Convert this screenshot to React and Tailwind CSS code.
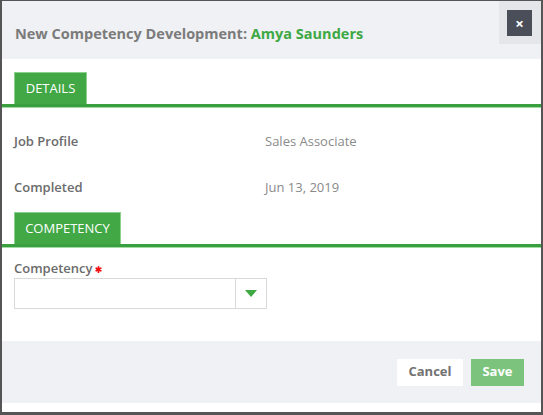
import React from "react";

const SectionTab = ({ label, width }) => (
  <div className="pl-[12px]">
    <div
      className={`flex h-[32px] items-center justify-center border border-b-0 border-[#8bd08d] bg-[#41a845] text-[13px] text-white ${width}`}
    >
      {label}
    </div>
    <div className="-ml-[12px] h-[3px] bg-[#3a9f3e]" />
    <div className="-ml-[12px] h-[1px] bg-[#a3dba5]" />
  </div>
);

const InfoRow = ({ label, value }) => (
  <div className="flex h-[46px] items-center pl-[12px] text-[13px]">
    <span className="w-[251px] font-semibold text-[#6b6b6b]">{label}</span>
    <span className="text-[#8a8a8a]">{value}</span>
  </div>
);

export default function App() {
  return (
    <div className="flex h-[415px] w-[543px] flex-col border-x-2 border-t border-b-[3px] border-[#555] bg-white font-['Open_Sans',sans-serif]">
      <div className="flex h-[58px] justify-between bg-[#f0f1f4]">
        <h1 className="pl-[13px] pt-[23px] text-[14.5px] leading-[20px] font-bold text-[#7b7b7b]">
          New Competency Development: <span className="text-[#3ea843]">Amya Saunders</span>
        </h1>
        <div className="flex h-[43px] w-[42px] items-start justify-start bg-[#e4e6ea] pl-[8px] pt-[9px]">
          <button className="flex h-[26px] w-[25px] items-center justify-center bg-[#4a4e58] text-[15px] leading-none font-bold text-white">
            ×
          </button>
        </div>
      </div>

      <div className="flex-1 pt-[13px]">
        <SectionTab label="DETAILS" width="w-[73px]" />
        <div className="pt-[11px]">
          <InfoRow label="Job Profile" value="Sales Associate" />
          <InfoRow label="Completed" value="Jun 13, 2019" />
        </div>
        <div className="mt-[1px]">
          <SectionTab label="COMPETENCY" width="w-[107px]" />
        </div>
        <div className="pl-[12px] pt-[12px]">
          <div className="flex h-[18px] items-center text-[13px] font-semibold text-[#6b6b6b]">
            Competency
            <svg className="ml-[3px]" width="7" height="7" viewBox="0 0 8 8">
              <g stroke="#f20d0d" strokeWidth="2" strokeLinecap="round">
                <path d="M4 1v6M1.4 2.5l5.2 3M1.4 5.5l5.2-3" />
              </g>
            </svg>
          </div>
          <div className="flex h-[31px] w-[253px] border border-[#d9d9d9]">
            <div className="flex-1" />
            <div className="flex w-[31px] items-center justify-center border-l border-[#d9d9d9]">
              <svg width="12" height="7" viewBox="0 0 12 7">
                <path d="M0 0h12L6 7z" fill="#3ea843" />
              </svg>
            </div>
          </div>
        </div>
      </div>

      <div className="flex h-[62px] items-center justify-end gap-[8px] bg-[#f0f1f4] pr-[17px]">
        <button className="h-[27px] w-[66px] bg-white text-[13px] font-bold text-[#727272]">Cancel</button>
        <button className="h-[27px] w-[53px] bg-[#7cc47e] text-[13px] font-bold text-white">Save</button>
      </div>
      <div className="h-[9px]" />
    </div>
  );
}
